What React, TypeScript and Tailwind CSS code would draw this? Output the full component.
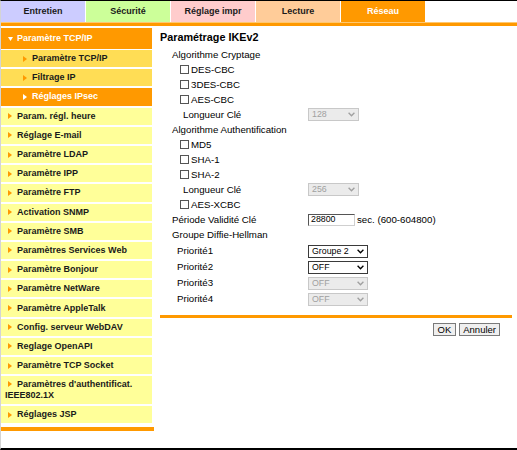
import React from "react";

const tabs = [
  { label: "Entretien", cls: "bg-[#ccccff] text-[#1a1a1a]" },
  { label: "Sécurité", cls: "bg-[#ccff99] text-[#1a1a1a]" },
  { label: "Réglage impr", cls: "bg-[#ffcccc] text-[#1a1a1a]" },
  { label: "Lecture", cls: "bg-[#ffcc99] text-[#1a1a1a]" },
  { label: "Réseau", cls: "bg-[#ff9900] text-white" },
];

type Kind = "sub" | "subActive" | "main";

const menu: { label: string; kind: Kind }[] = [
  { label: "Paramètre TCP/IP", kind: "sub" },
  { label: "Filtrage IP", kind: "sub" },
  { label: "Réglages IPsec", kind: "subActive" },
  { label: "Param. régl. heure", kind: "main" },
  { label: "Réglage E-mail", kind: "main" },
  { label: "Paramètre LDAP", kind: "main" },
  { label: "Paramètre IPP", kind: "main" },
  { label: "Paramètre FTP", kind: "main" },
  { label: "Activation SNMP", kind: "main" },
  { label: "Paramètre SMB", kind: "main" },
  { label: "Paramètres Services Web", kind: "main" },
  { label: "Paramètre Bonjour", kind: "main" },
  { label: "Paramètre NetWare", kind: "main" },
  { label: "Paramètre AppleTalk", kind: "main" },
  { label: "Config. serveur WebDAV", kind: "main" },
  { label: "Reglage OpenAPI", kind: "main" },
  { label: "Paramètre TCP Socket", kind: "main" },
];

function Arrow({ color }: { color: string }) {
  return (
    <svg width="4" height="6" viewBox="0 0 4 6" className="inline-block align-[0px]">
      <polygon points="0,0 4,3 0,6" fill={color} />
    </svg>
  );
}

function Sidebar() {
  return (
    <div className="flex w-[153px] shrink-0 flex-col text-[9px] font-bold leading-[11px]">
      <div className="mb-[1px] flex h-[21px] w-[151px] items-center bg-[#ff9900] pl-[7px] text-white">
        <svg width="5" height="4" viewBox="0 0 5 4" className="mr-[4px]">
          <polygon points="0,0 5,0 2.5,4" fill="#ffffff" />
        </svg>
        Paramètre TCP/IP
      </div>
      {menu.map((m) => {
        const bg =
          m.kind === "main"
            ? "bg-[#ffff99] text-[#1a1a1a] pl-[7px]"
            : m.kind === "sub"
              ? "bg-[#ffdd55] text-[#1a1a1a] pl-[22px]"
              : "bg-[#ff9900] text-white pl-[22px]";
        return (
          <div key={m.label} className={`mb-[2px] flex h-[17.2px] w-[151px] items-center ${bg}`}>
            <Arrow color={m.kind === "subActive" ? "#ffffff" : "#ff9900"} />
            <span className="ml-[5px]">{m.label}</span>
          </div>
        );
      })}
      <div className="mb-[2px] w-[151px] bg-[#ffff99] py-[3px] pl-[4px] text-[#1a1a1a]">
        <span className="ml-[3px] mr-[5px]">
          <Arrow color="#ff9900" />
        </span>
        Paramètres d'authentificat. IEEE802.1X
      </div>
      <div className="flex h-[17.2px] w-[151px] items-center bg-[#ffff99] pl-[7px] text-[#1a1a1a]">
        <Arrow color="#ff9900" />
        <span className="ml-[5px]">Réglages JSP</span>
      </div>
      <div className="mt-[4px] h-[4px] w-[153px] bg-[#ff9900]" />
    </div>
  );
}

function Chevron() {
  return (
    <svg width="7" height="5" viewBox="0 0 7 5">
      <polyline points="0.6,0.8 3.5,3.8 6.4,0.8" fill="none" stroke="currentColor" strokeWidth="1.3" />
    </svg>
  );
}

function Select({ value, w, disabled }: { value: string; w: string; disabled?: boolean }) {
  return (
    <div
      className={`flex h-[13px] items-center justify-between border pl-[3px] pr-[3px] text-[8.8px] leading-none ${w} ${
        disabled ? "border-[#c8c8c8] bg-[#ebebeb] text-[#a0a0a0]" : "border-[#3a3a3a] bg-white text-black"
      }`}
    >
      <span>{value}</span>
      <Chevron />
    </div>
  );
}

function Check({ label }: { label: string }) {
  return (
    <div className="flex h-[15px] items-center pl-[20px]">
      <span className="h-[9px] w-[9px] border border-[#555] bg-white" />
      <span className="ml-[2px]">{label}</span>
    </div>
  );
}

function Row({ label, pl, children }: { label: string; pl: string; children: React.ReactNode }) {
  return (
    <div className={`flex h-[15px] items-center ${pl}`}>
      <span className="flex-1">{label}</span>
      <div className="w-[204px]">{children}</div>
    </div>
  );
}

function Panel() {
  return (
    <div className="ml-[6px] flex w-[352px] flex-col text-[9.7px] leading-[12px]">
      <div className="mt-[2px] h-[14px] text-[10.8px] font-bold leading-[14px]">Paramétrage IKEv2</div>
      <div className="mt-[3px] flex h-[15px] items-center pl-[12px]">Algorithme Cryptage</div>
      <Check label="DES-CBC" />
      <Check label="3DES-CBC" />
      <Check label="AES-CBC" />
      <Row label="Longueur Clé" pl="pl-[23px]">
        <Select value="128" w="w-[51px]" disabled />
      </Row>
      <div className="flex h-[15px] items-center pl-[12px]">Algorithme Authentification</div>
      <Check label="MD5" />
      <Check label="SHA-1" />
      <Check label="SHA-2" />
      <Row label="Longueur Clé" pl="pl-[23px]">
        <Select value="256" w="w-[51px]" disabled />
      </Row>
      <Check label="AES-XCBC" />
      <Row label="Période Validité Clé" pl="pl-[12px]">
        <div className="flex items-center">
          <div className="flex h-[12px] w-[47px] items-center border border-t-[#555] border-l-[#555] border-r-[#cfcfcf] border-b-[#cfcfcf] bg-white pl-[2px] text-[8.8px] leading-none">
            28800
          </div>
          <span className="ml-[2px]">sec. (600-604800)</span>
        </div>
      </Row>
      <div className="flex h-[16px] items-center pl-[12px]">Groupe Diffie-Hellman</div>
      {[
        { l: "Priorité1", v: "Groupe 2", d: false },
        { l: "Priorité2", v: "OFF", d: false },
        { l: "Priorité3", v: "OFF", d: true },
        { l: "Priorité4", v: "OFF", d: true },
      ].map((p) => (
        <div key={p.l} className="flex h-[16px] items-center pl-[17px]">
          <span className="flex-1">{p.l}</span>
          <div className="w-[204px]">
            <Select value={p.v} w="w-[60px]" disabled={p.d} />
          </div>
        </div>
      ))}
      <div className="mt-[8px] h-[3px] bg-[#ff9900]" />
      <div className="mt-[5px] flex justify-end gap-[3px] pr-[12px]">
        <button className="h-[13px] border border-[#7a7a7a] bg-[#efefef] px-[4px] text-[9.5px] leading-none text-black">
          OK
        </button>
        <button className="h-[13px] border border-[#7a7a7a] bg-[#efefef] px-[3px] text-[9.5px] leading-none text-black">
          Annuler
        </button>
      </div>
    </div>
  );
}

export default function App() {
  return (
    <div className="flex h-[450px] w-[517px] flex-col overflow-hidden border-t border-b-2 border-l border-t-black border-b-black border-l-[#d4d4d4] bg-white font-['Liberation_Sans',Arial,sans-serif] text-black">
      <div className="flex h-[21px] shrink-0 gap-[1px]">
        {tabs.map((t) => (
          <div
            key={t.label}
            className={`flex w-[84px] items-center justify-center text-[9px] font-bold ${t.cls}`}
          >
            {t.label}
          </div>
        ))}
      </div>
      <div className="h-[1px] shrink-0 bg-[#ffc870]" />
      <div className="h-[3px] shrink-0 bg-[#ff9900]" />
      <div className="mt-[2px] flex flex-1">
        <Sidebar />
        <Panel />
      </div>
    </div>
  );
}
